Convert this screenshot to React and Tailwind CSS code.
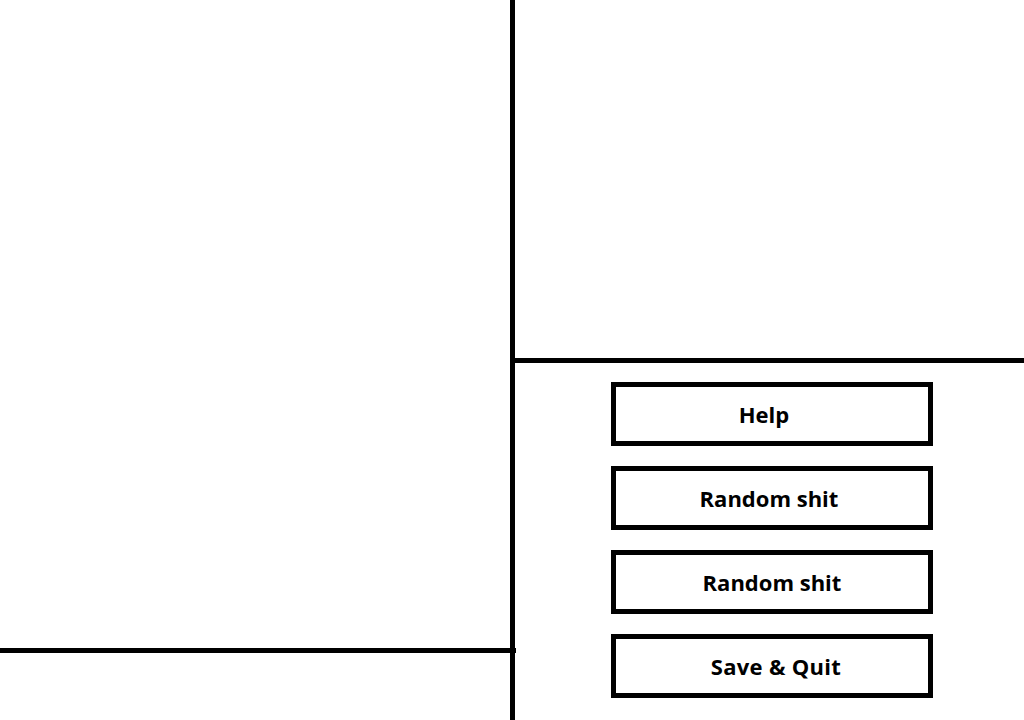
const menuItems = [
  { label: "Help", nudge: "pr-[16px]" },
  { label: "Random shit", nudge: "pr-[6px]" },
  { label: "Random shit", nudge: "" },
  { label: "Save & Quit", nudge: "pl-[8px] tracking-[0.3px]" },
];

export default function App() {
  return (
    <div className="flex h-[720px] w-[1024px] overflow-hidden bg-white font-['Open_Sans',sans-serif] text-black">
      {/* left pane */}
      <div className="flex w-[510px] flex-col">
        <div className="h-[648px]" />
        <div className="h-[5px] w-[516px] bg-black" />
        <div className="flex-1" />
      </div>

      <div className="w-[5px] bg-black" />

      {/* right pane */}
      <div className="flex flex-1 flex-col">
        <div className="h-[358px]" />
        <div className="h-[5px] bg-black" />
        <div className="flex flex-col gap-[20px] pl-[96px] pt-[19px]">
          {menuItems.map((item, i) => (
            <button
              key={i}
              type="button"
              className={[
                "flex h-[64px] w-[322px] items-center justify-center border-[5px] border-black bg-white text-[22px] font-bold",
                item.nudge,
              ].join(" ")}
            >
              {item.label}
            </button>
          ))}
        </div>
      </div>
    </div>
  );
}
